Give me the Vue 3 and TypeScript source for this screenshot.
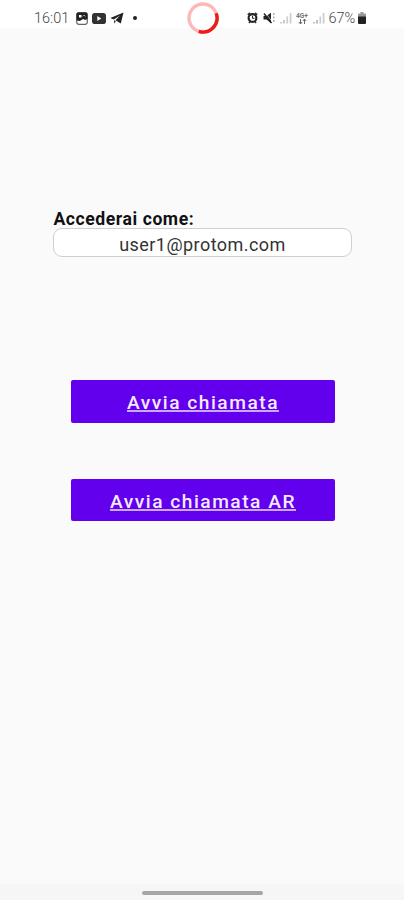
<script setup lang="ts">
import { ref } from 'vue'

const time = ref('16:01')
const battery = ref(67)
const email = ref('user1@protom.com')
const actions = ['Avvia chiamata', 'Avvia chiamata AR']
</script>

<template>
  <div class="screen">
    <header class="status">
      <div class="left">
        <span class="clock">{{ time }}</span>
        <svg class="gallery" width="12" height="13" viewBox="0 0 12 13">
          <rect x="0.7" y="0.7" width="10.6" height="11.6" rx="2.2" fill="#fff" stroke="#666" stroke-width="1.2" />
          <path d="M0.500 8.500V2.500Q0.500 0.500 2.500 0.500h7Q11.500 0.500 11.500 2.500V7L9 8 7 7 4 9z" fill="#222" />
          <path d="M3 3h2.500v2.500H3z" fill="#fff" />
          <path d="M6.500 4.500 8 3l1.500 1.500" fill="none" stroke="#999" />
        </svg>
        <svg class="video" width="14" height="11" viewBox="0 0 14 11">
          <rect width="14" height="11" rx="2.800" fill="#333" />
          <path d="M5.300 3v5l4-2.500z" fill="#fff" />
        </svg>
        <svg class="plane" width="14" height="12" viewBox="0 0 14 12">
          <path d="M13.500 0.500 0.300 6l3.500 1.500L10 3.500 5.500 8.200l5.300 3.300z" fill="#222" />
          <path d="M4 8v3.500l2-2z" fill="#444" />
        </svg>
        <i class="dot"></i>
      </div>
      <svg class="ring" width="34" height="34" viewBox="0 0 34 34" fill="none" stroke-width="3.400">
        <circle cx="17" cy="17" r="14" stroke="#fbb9b9" />
        <path d="M30.200 12.300A14 14 0 0 1 12.700 30.300" stroke="#ee1c16" />
      </svg>
      <div class="right">
        <svg class="alarm" width="11" height="12" viewBox="0 0 11 12" fill="none">
          <path d="M0.800 2.800 3 0.800M10.200 2.800 8 0.800M2 11l1-1.200M9 11 8 9.800" stroke="#333" stroke-width="1.700" />
          <circle cx="5.500" cy="6" r="3.900" stroke="#222" stroke-width="2.100" />
          <path d="M5.500 3.800v2.500h2" stroke="#222" />
        </svg>
        <svg class="mute" width="13" height="12" viewBox="0 0 13 12">
          <path d="M0.500 4H3.500L8 0.800V11.200L3.500 7.500H0.500z" fill="#222" />
          <path d="M2.800 1.300 9 9.500" stroke="#fff" stroke-width="0.600" />
          <path d="M1 1.500 8.500 11" stroke="#222" stroke-width="1.400" />
          <path d="M10.800 1v10" stroke="#999" stroke-width="1.200" stroke-dasharray="2 1.500" />
        </svg>
        <svg class="signal" width="12" height="12" viewBox="0 0 12 12">
          <path d="M1 10v1.500M4 8v3.500" stroke="#bbb" stroke-width="1.500" />
          <path d="M7.300 4.500v7M10.600 1v10.500" stroke="#ccc" stroke-width="1.700" />
        </svg>
        <svg class="network" width="13" height="13" viewBox="0 0 13 13">
          <text x="0" y="6.200" font-size="7.500" font-weight="700" textLength="12" lengthAdjust="spacingAndGlyphs" fill="#777">4G+</text>
          <path d="M4.500 7v5M2.800 10l1.700 2 1.700-2M8.500 12V7M6.800 9l1.700-2 1.700 2" fill="none" stroke="#666" />
        </svg>
        <svg class="signal" width="12" height="12" viewBox="0 0 12 12">
          <path d="M1 10v1.500M4 8v3.500" stroke="#aaa" stroke-width="1.500" />
          <path d="M7.300 4.500v7M10.600 1v10.500" stroke="#ccc" stroke-width="1.700" />
        </svg>
        <span class="percent">{{ battery }}%</span>
        <svg class="cell" width="8" height="12" viewBox="0 0 8 12">
          <path d="M2.500 0h3v1.500H7Q8 1.500 8 2.500V5H0V2.500Q0 1.500 1 1.500h1.500z" fill="#999" />
          <path d="M0 4.500h8V11Q8 12 7 12H1Q0 12 0 11z" fill="#222" />
        </svg>
      </div>
    </header>

    <main class="content">
      <label class="label" for="user">Accederai come:</label>
      <input id="user" v-model="email" class="field" type="text" />
      <div class="actions">
        <button v-for="action in actions" :key="action" class="action" type="button">
          <span>{{ action }}</span>
        </button>
      </div>
    </main>

    <footer class="nav"><i class="handle"></i></footer>
  </div>
</template>

<style>
body {
  background: #fafafa;
}
</style>

<style scoped>
.screen {
  box-sizing: border-box;
  width: 404px;
  height: 900px;
  display: flex;
  flex-direction: column;
  background: #fafafa;
  font-family: Roboto, "Liberation Sans", sans-serif;
  overflow: hidden;
}
svg {
  display: block;
  flex: none;
}
.status {
  display: grid;
  grid-template-columns: 151.5px 34px 1fr;
  height: 28px;
  flex: none;
  padding-left: 34px;
  background: #fff;
}
.left,
.right {
  display: flex;
  align-items: center;
  height: 36px;
}
.clock,
.percent {
  padding-top: 2px;
  font-size: 14.5px;
  font-weight: 300;
  line-height: 18px;
  color: #444;
  white-space: nowrap;
}
.clock {
  width: 42px;
}
.video {
  margin-left: 4px;
}
.plane {
  margin-left: 4px;
}
.dot {
  width: 4px;
  height: 4px;
  margin-left: 9px;
  border-radius: 50%;
  background: #222;
}
.ring {
  margin-top: 0.5px;
}
.right {
  padding-left: 27px;
}
.mute {
  margin-left: 5px;
}
.signal {
  margin-left: 4px;
}
.network {
  margin-left: 4px;
}
.percent {
  width: 29px;
  margin-left: 4px;
}
.content {
  flex: 1;
  display: flex;
  flex-direction: column;
  padding: 180px 52px 0 53px;
}
.label {
  height: 20px;
  padding-left: 0.5px;
  font-size: 17.6px;
  font-weight: 700;
  line-height: 23px;
  letter-spacing: 0.55px;
  color: #111;
}
.field {
  box-sizing: border-box;
  width: 299px;
  height: 29px;
  margin: 0;
  padding: 3px 0 0;
  border: 1px solid #d0d0d0;
  border-radius: 9px;
  background: #fff;
  font-family: inherit;
  font-size: 18px;
  font-weight: 400;
  letter-spacing: 0.45px;
  text-align: center;
  color: #333;
}
.actions {
  display: flex;
  flex-direction: column;
  gap: 56px;
  padding: 123px 17px 0 18px;
}
.action {
  height: 42.5px;
  margin: 0;
  padding: 4px 0 0;
  border: 0;
  border-radius: 2px;
  background: #6200ee;
  font-family: inherit;
  font-size: 19.2px;
  font-weight: 500;
  line-height: 24px;
  letter-spacing: 1.5px;
  color: #f3eaff;
}
.action span {
  text-decoration: underline;
  text-decoration-color: #c9a8fa;
  text-decoration-thickness: 2px;
  text-decoration-skip-ink: none;
  text-underline-offset: 1px;
}
.nav {
  display: flex;
  justify-content: center;
  height: 16px;
  flex: none;
  background: #f6f6f6;
}
.handle {
  width: 121px;
  height: 4px;
  margin-top: 7px;
  border-radius: 2px;
  background: #a5a5a5;
}
</style>
